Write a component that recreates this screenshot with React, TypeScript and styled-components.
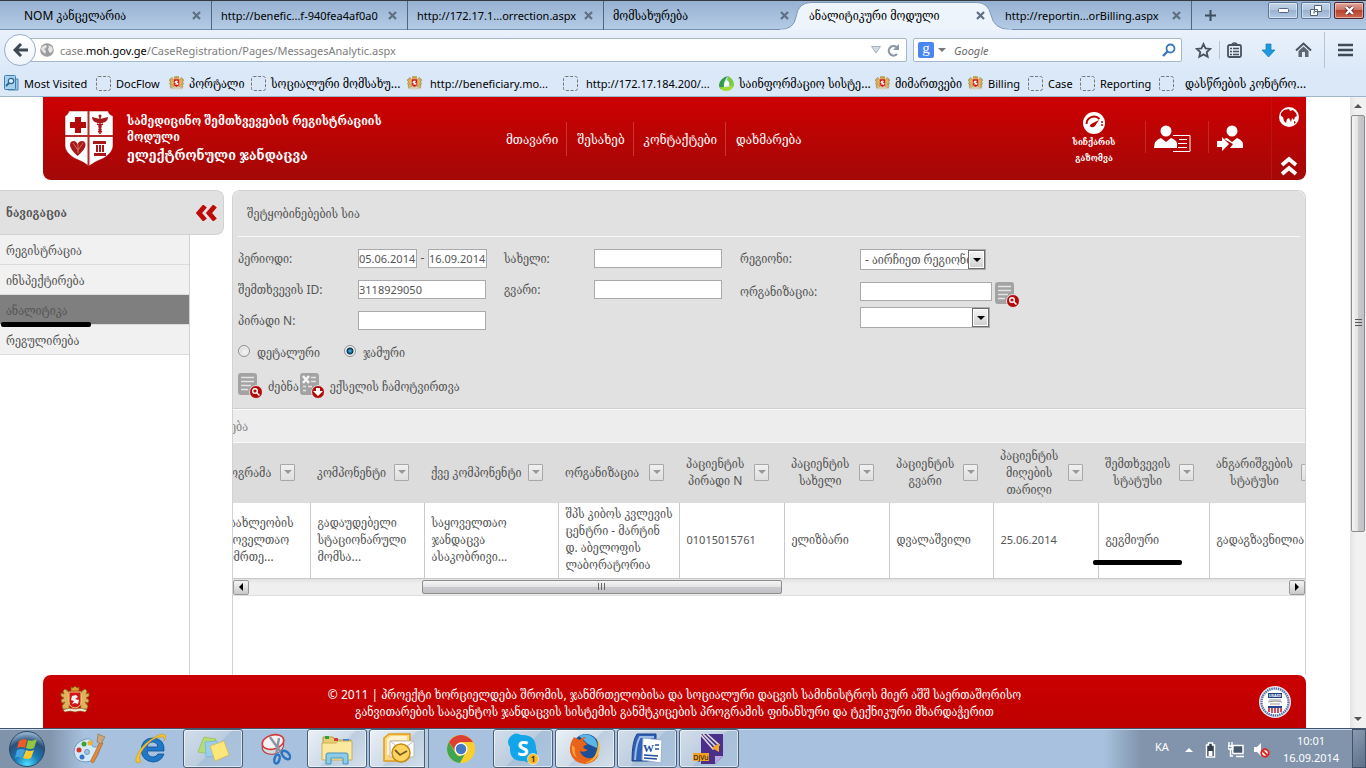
import React, { useLayoutEffect, useRef } from 'react';
import styled, { createGlobalStyle, css } from 'styled-components';

const uiFont = '"Noto Sans", "DejaVu Serif Condensed", sans-serif';

const GlobalStyle = createGlobalStyle`
  *, *::before, *::after { box-sizing: border-box; }
  body { margin: 0; background: #fff; color: #555; font-family: ${uiFont}; font-size: 12px; }
  button, input, select { font: inherit; color: inherit; margin: 0; }
  button { border: 0; padding: 0; background: none; cursor: pointer; }
  a { color: inherit; text-decoration: none; }
  svg { display: block; flex: none; }
  ul { margin: 0; padding: 0; list-style: none; }
  h1, h2, h3, p { margin: 0; font-size: inherit; font-weight: normal; }
`;

const Desktop = styled.div`
  display: flex;
  flex-direction: column;
  min-height: 100vh;
  overflow: hidden;
`;

/* ---------- browser tabs ---------- */
const TabStrip = styled.div`
  display: flex;
  height: 30px;
  color: #000;
  border-top: 1px solid #35383d;
  background: linear-gradient(#96b1d1, #b5cce6);
  box-shadow: inset 0 -1px #7590b0;
`;

const Tab = styled.div<{ $active?: boolean; $edge?: boolean }>`
  position: relative;
  display: flex;
  align-items: center;
  width: 196px;
  flex: 0 1 auto;
  padding: 0 6px 0 9px;
  border-right: 1px solid ${p => (p.$edge ? 'transparent' : '#4f6580')};
  white-space: nowrap;
  &:first-child { width: 212px; padding-left: 24px; }
`;

const TabShape = styled.svg`
  position: absolute;
  left: -20px;
  top: 0;
`;

const TabLabel = styled.span<{ $latin?: boolean }>`
  position: relative;
  flex: 1;
  overflow: hidden;
  font-size: ${p => (p.$latin ? 11 : 12)}px;
`;

const TabClose = styled.button`
  position: relative;
  display: flex;
  padding: 4px;
`;

const NewTab = styled.button`
  padding: 0 13px;
`;

const WindowButtons = styled.div`
  display: flex;
  gap: 3px;
  margin-left: auto;
  padding: 1px 2px 0 0;
`;

const WindowButton = styled.button<{ $danger?: boolean }>`
  display: flex;
  align-items: center;
  justify-content: center;
  width: 30px;
  height: 17px;
  border: 1px solid ${p => (p.$danger ? '#4d2433' : '#5f7796')};
  border-radius: 2px;
  box-shadow: inset 0 0 0 1px rgba(255, 255, 255, 0.45);
  background: ${p =>
    p.$danger
      ? 'linear-gradient(#e0a79b, #cd7566 45%, #b8412f 50%, #cd6a50)'
      : 'linear-gradient(#c3d4e8, #b0c5de 45%, #98b2d0 50%, #b4cae3)'};
`;

/* ---------- browser navigation ---------- */
const Toolbar = styled.div`
  display: flex;
  align-items: center;
  height: 40px;
  padding: 0 12px 0 4px;
  background: linear-gradient(#e9f1fb, #dce9f8);
`;

const BackButton = styled.button`
  position: relative;
  z-index: 1;
  display: flex;
  align-items: center;
  justify-content: center;
  width: 32px;
  height: 32px;
  margin-right: -8px;
  border: 1px solid #98aec8;
  border-radius: 50%;
  background: linear-gradient(#fdfeff, #eef4fb);
`;

const AddressBar = styled.div`
  display: flex;
  align-items: center;
  gap: 6px;
  flex: 1;
  height: 24px;
  padding: 0 6px 0 11px;
  border: 1px solid #a3b7ce;
  border-radius: 2px;
  background: #fff;
`;

const AddressText = styled.div`
  flex: 1;
  font-size: 11px;
  color: #7d7d7d;
  b { font-weight: normal; color: #000; }
`;

const SearchBar = styled.div`
  display: flex;
  align-items: center;
  gap: 4px;
  width: 269px;
  height: 24px;
  margin: 0 13px 0 6px;
  padding: 0 5px 0 4px;
  border: 1px solid #a3b7ce;
  border-radius: 2px;
  background: #fff;
`;

const GoogleBadge = styled.span`
  width: 16px;
  height: 16px;
  border-radius: 2px;
  background: #4a86f0;
  color: #fff;
  font: 15px/12px "Liberation Serif", serif;
  text-align: center;
`;

const SearchInput = styled.input`
  flex: 1;
  min-width: 0;
  padding: 0 0 0 4px;
  border: 0;
  outline: 0;
  background: none;
  font-size: 11px;
  &::placeholder { color: #6b6b6b; font-style: italic; opacity: 1; }
`;

const ToolIcons = styled.div`
  display: flex;
  align-items: center;
  gap: 18px;
  height: 100%;
`;

const ToolGroup = styled.div`
  display: flex;
  align-items: center;
  gap: 7px;
`;

const ToolDivider = styled.i<{ $tall?: boolean }>`
  width: 1px;
  height: ${p => (p.$tall ? 36 : 18)}px;
  margin: ${p => (p.$tall ? '0 -6px' : 0)};
  background: #b5c4d6;
`;

const Bookmarks = styled.nav`
  display: flex;
  align-items: center;
  height: 27px;
  padding-left: 4px;
  border-bottom: 1px solid #9db4cd;
  background: #dae8f8;
  color: #000;
`;

const Bookmark = styled.a<{ $width: number; $gap?: number; $latin?: boolean }>`
  display: flex;
  align-items: center;
  flex: none;
  gap: ${p => p.$gap ?? 5}px;
  width: ${p => p.$width}px;
  font-size: ${p => (p.$latin ? 11 : 12)}px;
  white-space: nowrap;
`;

/* ---------- viewport ---------- */
const Viewport = styled.div`
  display: flex;
  flex: 1;
  background: #fff;
`;

const Page = styled.div`
  display: flex;
  flex-direction: column;
  flex: 1;
  min-width: 0;
`;

const SiteHeader = styled.header`
  display: flex;
  height: 83px;
  margin: 0 44px 0 43px;
  border-radius: 0 0 8px 8px;
  background: linear-gradient(#cd0000, #a40808);
  color: #fff;
`;

const Brand = styled.div`
  display: flex;
  gap: 12px;
  width: 453px;
  padding: 13px 0 0 21px;
`;

const BrandName = styled.div`
  width: 290px;
  padding-top: 3px;
  h1, h2 { font-weight: bold; }
  h2 { font-size: 12px; line-height: 16px; }
  h1 { font-size: 14px; line-height: 20px; }
`;

const MainNav = styled.nav`
  display: flex;
  align-items: center;
  height: 34px;
  margin-top: 25px;
  font-size: 13px;
  a { padding: 0 8px 0 10px; line-height: 34px; border-right: 1px solid #c93434; white-space: nowrap; }
  a:last-child { border-right: 0; }
`;

const HeaderTools = styled.div`
  display: flex;
  margin-left: auto;
`;

const ToolCell = styled.a`
  display: flex;
  align-items: flex-end;
  width: 63px;
  height: 32px;
  margin-top: 24px;
  padding-left: 8px;
  border-left: 1px solid #c22a2a;
`;

const SpeedTest = styled.a`
  display: flex;
  flex-direction: column;
  align-items: center;
  width: 102px;
  padding-top: 15px;
  font-size: 9px;
  line-height: 16px;
  font-weight: bold;
  text-align: center;
`;

const CornerTools = styled.div`
  display: flex;
  flex-direction: column;
  align-items: center;
  justify-content: space-between;
  width: 35px;
  padding: 10px 0 4px;
  border-left: 1px solid #b81616;
`;

const Columns = styled.div`
  display: flex;
  flex: 1;
  gap: 8px;
  margin: 10px 44px 0 0;
`;

const Sidebar = styled.aside`
  position: relative;
  display: flex;
  flex-direction: column;
  width: 224px;
  flex: none;
`;

const SidebarHead = styled.div`
  display: flex;
  align-items: center;
  justify-content: space-between;
  height: 45px;
  padding: 0 6px;
  border: 1px solid #d2d2d2;
  border-left: 0;
  border-radius: 0 8px 8px 0;
  background: #e1e1e1;
  h2 { font-weight: bold; }
`;

const SidebarList = styled.ul`
  flex: 1;
  width: 190px;
  border-right: 1px solid #d2d2d2;
`;

const SidebarItem = styled.li<{ $active?: boolean }>`
  height: 30px;
  padding-left: 6px;
  line-height: 31px;
  border-bottom: 1px solid #dcdcdc;
  background: ${p => (p.$active ? '#7f7f7f' : '#f1f1f1')};
`;

const markStyle = css`
  position: absolute;
  height: 5px;
  border-radius: 2px;
  background: #000;
`;

const SidebarMark = styled.i`
  ${markStyle}
  left: 1px;
  top: 132px;
  width: 90px;
`;

const CellMark = styled.i`
  ${markStyle}
  left: -6px;
  bottom: 13px;
  width: 89px;
`;

const Panel = styled.main`
  display: flex;
  flex-direction: column;
  flex: 1;
  min-width: 0;
  border: 1px solid #d2d2d2;
  border-width: 1px 1px 0;
  border-radius: 8px 8px 0 0;
`;

const FilterBox = styled.form`
  height: 218px;
  padding: 0 5px;
  border-bottom: 1px solid #d0d0d0;
  border-radius: 8px 8px 0 0;
  background: #e1e1e1;
`;

const PanelTitle = styled.h2`
  padding-left: 9px;
  line-height: 45px;
  border-bottom: 1px solid #f8f8f8;
`;

const Fields = styled.div`
  display: flex;
  margin-top: 12px;
`;

const FieldColumn = styled.div<{ $width?: number }>`
  display: flex;
  flex-direction: column;
  gap: 12px;
  width: ${p => (p.$width ? p.$width + 'px' : 'auto')};
`;

const Field = styled.div<{ $label: number }>`
  display: flex;
  > label, > span:first-child { width: ${p => p.$label}px; flex: none; line-height: 19px; }
`;

const boxStyle = css`
  height: 19px;
  padding: 0;
  border: 1px solid #a9a9ae;
  border-radius: 0;
  outline: 0;
  background: #fff;
  font-size: 11px;
`;

const TextBox = styled.input<{ $width: number }>`
  ${boxStyle}
  width: ${p => p.$width}px;
`;

const PeriodDash = styled.span`
  width: 11px;
  text-align: center;
`;

const SelectWrap = styled.div<{ $width: number }>`
  position: relative;
  width: ${p => p.$width}px;
  select {
    ${boxStyle}
    appearance: none;
    display: block;
    width: 100%;
    height: 21px;
    padding: 0 17px 0 4px;
    font-size: 12px;
    text-overflow: clip;
  }
`;

const SelectArrow = styled.span`
  position: absolute;
  top: 1px;
  right: 1px;
  display: flex;
  align-items: center;
  justify-content: center;
  width: 17px;
  height: 19px;
  border: 1px solid #6c6c6c;
  background: linear-gradient(#f6f6f6, #cfcfcf);
  box-shadow: inset 0 0 0 1px #fff;
  pointer-events: none;
`;

const OrgRow = styled(Field)`
  height: 19px;
  margin-bottom: -6px;
  button { margin-left: 3px; }
`;

const Radios = styled.div`
  display: flex;
  gap: 24px;
  margin-top: 13px;
  line-height: 20px;
  label { display: flex; gap: 7px; }
`;

const Radio = styled.input`
  appearance: none;
  width: 12px;
  height: 12px;
  margin: 2px 0 0;
  border: 1px solid #8e8f8f;
  border-radius: 50%;
  background: radial-gradient(circle at 60% 60%, #f5f5f5, #c9cdd1);
  box-shadow: inset 0 0 0 1px #f4f4f4;
  &:checked { background: radial-gradient(circle, #5bc4f0 0, #14648c 2px, #0b2c45 3px, #e8ecef 4px); }
`;

const Actions = styled.div`
  display: flex;
  gap: 1px;
  margin-top: 10px;
  button { display: flex; align-items: center; gap: 6px; white-space: nowrap; }
`;

const GridScroller = styled.div`
  overflow: hidden;
`;

const GridContent = styled.div`
  width: 1124px;
`;

const GroupBar = styled.div`
  height: 34px;
  padding-left: 17px;
  line-height: 34px;
  border: 1px solid #fafafa;
  border-width: 1px 0;
  background: #ededed;
  color: #858585;
`;

const Grid = styled.table`
  width: 100%;
  table-layout: fixed;
  border-collapse: collapse;
  line-height: 17px;
  th { height: 60px; padding: 0 6px 2px 7px; background: #dcdcdc; font-weight: normal; }
  td {
    position: relative;
    height: 75px;
    padding: 0 0 2px 7px;
    border-right: 1px solid #c9c9c9;
    border-bottom: 1px solid #c9c9c9;
    white-space: pre;
  }
`;

const Column = styled.col<{ $width: number }>`
  width: ${p => p.$width}px;
`;

const HeadCell = styled.div`
  display: flex;
  align-items: center;
  justify-content: space-between;
  padding-right: 9px;
  white-space: pre;
  text-align: center;
`;

const FilterButton = styled.button`
  display: flex;
  align-items: center;
  justify-content: center;
  flex: none;
  width: 15px;
  height: 17px;
  border: 1px solid #a8a8a8;
  border-radius: 1px;
  background: linear-gradient(#f0f0f0, #dfdfdf);
`;

const Numeric = styled.span`
  font-size: 11px;
`;

const HScroll = styled.div`
  display: flex;
  height: 17px;
  padding: 1px 0;
  background: linear-gradient(#e2e2e2, #efefef 5px);
  border-bottom: 1px solid #dedede;
`;

const HThumb = styled.div`
  display: flex;
  align-items: center;
  justify-content: center;
  flex: 359;
  border: 1px solid #8c8c8c;
  border-radius: 2px;
  background: linear-gradient(#f5f5f5, #e3e3e5 48%, #cacace 52%, #c1c1c6);
`;

const Space = styled.div<{ $grow: number }>`
  flex: ${p => p.$grow};
`;

const ScrollButton = styled.button`
  display: flex;
  align-items: center;
  justify-content: center;
  width: 16px;
  height: 15px;
  border: 1px solid #999;
  border-radius: 2px;
  background: linear-gradient(#f5f5f5, #c9c9cd);
`;

const VScroll = styled.div`
  display: flex;
  flex-direction: column;
  width: 16px;
  flex: none;
  background: linear-gradient(90deg, #e4e4e4, #f1f1f1 6px);
`;

const VEnd = styled.button`
  display: flex;
  align-items: center;
  justify-content: center;
  height: 18px;
`;

const VThumb = styled.div`
  display: flex;
  align-items: center;
  justify-content: center;
  flex: 417;
  margin: 0 1px;
  border: 1px solid #8c8c8c;
  border-radius: 2px;
  background: linear-gradient(90deg, #f5f5f5, #e3e3e5 48%, #cacace 52%, #c1c1c6);
`;

const Footer = styled.footer`
  display: flex;
  align-items: flex-start;
  justify-content: space-between;
  height: 53px;
  margin: 0 44px 0 43px;
  padding: 11px 15px 0 17px;
  border-radius: 8px 8px 0 0;
  background: linear-gradient(#cb0000, #be0000);
  color: #fff;
  text-align: center;
  line-height: 17px;
`;

/* ---------- taskbar ---------- */
const Taskbar = styled.div`
  display: flex;
  height: 40px;
  border-top: 1px solid #3f556e;
  box-shadow: inset 0 1px #c9d9ea;
  background: linear-gradient(90deg, #7f93ab 0, #8195ad 50px, #a7c1de 84px, #a7c1de calc(100% - 262px), #8194ab calc(100% - 225px), #8194ab);
`;

const StartButton = styled.button`
  width: 59px;
  padding-left: 8px;
`;

const TaskList = styled.div`
  display: flex;
  gap: 2px;
  flex: 1;
`;

const TaskButton = styled.button<{ $open?: boolean; $lit?: boolean }>`
  position: relative;
  display: flex;
  align-items: center;
  justify-content: center;
  width: 60px;
  border-radius: 3px;
  ${p =>
    p.$open &&
    css`
      border: 1px solid #4b5f77;
      box-shadow: inset 0 0 0 1px rgba(255, 255, 255, 0.55);
      background: ${p.$lit ? 'linear-gradient(135deg, #eaf0f6, #cfdbe8 50%, #bccddf 52%, #d5e0eb)' : 'linear-gradient(135deg, #d3deea, #bccddf 50%, #a9c0d9 52%, #adc4de)'};
    `}
`;

const StackEdge = styled.i`
  position: absolute;
  top: -1px;
  right: -1px;
  bottom: -1px;
  width: 5px;
  border-left: 1px solid #4b5f77;
  background: #b9cbdf;
  border-right: 1px solid #5b6f87;
`;

const Tray = styled.div`
  display: flex;
  align-items: center;
  color: #fff;
`;

const TrayLang = styled.span`
  width: 30px;
  padding-bottom: 5px;
  font-size: 11px;
`;

const TrayIcons = styled.div`
  display: flex;
  align-items: center;
  gap: 8px;
  padding-top: 2px;
`;

const Clock = styled.div`
  width: 82px;
  text-align: center;
  font-size: 11px;
  line-height: 17px;
`;

const ShowDesktop = styled.button`
  align-self: stretch;
  width: 14px;
  border: 1px solid #40536a;
  background: linear-gradient(135deg, #8a9bb0, #5d7088);
`;

/* ---------- drawings ---------- */
const CloseGlyph = () => (
  <svg width="9" height="9" viewBox="0 0 9 9"><path d="M1 1l7 7M8 1l-7 7" stroke="#5f7085" strokeWidth="2.2" /></svg>
);

const Dashed = () => (
  <svg width="15" height="15" viewBox="0 0 15 15"><rect x=".5" y=".5" width="14" height="14" rx="2" fill="none" stroke="#777" strokeDasharray="3 1.6" /></svg>
);

const Crest = ({ size = 15 }: { size?: number }) => (
  <svg width={size} height={size * 0.9} viewBox="0 0 30 27">
    <path d="M11 5V1l2 1 2-2 2 2 2-1v4z" fill="#d9a22a" stroke="#8a5a10" strokeWidth=".8" />
    <path d="M10 10L8 5 5 3 3 5l1 3-3-1v3l3 2-3 2 1 3 3-1-3 4 1 3h6z" fill="#dcb45a" stroke="#8d6a25" strokeWidth=".9" />
    <path d="M20 10l2-5 3-2 2 2-1 3 3-1v3l-3 2 3 2-1 3-3-1 3 4-1 3h-6z" fill="#dcb45a" stroke="#8d6a25" strokeWidth=".9" />
    <path d="M3 24q6-3 12-1 6-2 12 1l-2 2q-5-2-10 0-5-2-10 0z" fill="#f3ead2" stroke="#8d6a25" strokeWidth=".6" />
    <path d="M9 6h12v10q0 5-6 6-6-1-6-6z" fill="#d3151c" stroke="#f2d17a" />
    <path d="M12 18l2-3-3-1 1-4 4-1 2 2-3 2 4 1-1 4-3-1z" fill="#f4f4f4" />
  </svg>
);

const MostVisited = () => (
  <svg width="15" height="16" viewBox="0 0 15 16">
    <path d="M10 4h4v11H4" fill="#9cc6e4" stroke="#4d8ab8" />
    <rect x=".5" y=".5" width="11" height="14" rx="1" fill="#a9d0ec" stroke="#3f7eae" />
    <circle cx="7" cy="6" r="2.7" fill="#d9edfa" stroke="#2f648f" strokeWidth="1.2" />
    <path d="M5 8l-3 3" stroke="#2f648f" strokeWidth="1.8" />
  </svg>
);

const GreenDrop = () => (
  <svg width="15" height="15" viewBox="0 0 15 15">
    <path d="M9 0Q1 2 0 9q0 4 4 5L5 10Q4 6 9 0z" fill="#2f9e44" />
    <path d="M9 0q6 3 6 9 0 2-2 3l-3-3q1-3-2-5z" fill="#7ac943" />
    <path d="M1 11q7 1 13-2 0 6-7 6-5 0-6-4z" fill="#a4d935" />
    <path d="M8 5q3 2 2 4-3 1-5 1 0-3 3-5z" fill="#fff" />
  </svg>
);

const Globe = () => (
  <svg width="14" height="14" viewBox="0 0 14 14">
    <circle cx="7" cy="7" r="6.8" fill="#9c9c9c" />
    <path d="M2 4l3-2 2 1-1 2-2 1 2 2-1 3-2-2-2-3zM8 2l4 2 1 3-2 3-2-1-1-3 1-2z" fill="#e6e6e6" />
  </svg>
);

const Shield = () => (
  <svg width="51" height="57" viewBox="0 0 51 57">
    <path d="M5 1h39q1 4 5 5v30q0 6-9 12-8 3-15 8-7-5-15-8-9-6-9-12V6q3-1 4-5z" fill="#fff" stroke="#8f0505" strokeOpacity=".5" />
    <path d="M24.500 1v55M1 26h48" stroke="#b32b2b" strokeWidth="2" />
    <path d="M11 7h6v5h5v6h-5v5h-6v-5H6v-6h5z" fill="#b20b0b" />
    <path d="M28 7l8 2 8-2q0 5-6 6h-4q-6-1-6-6z" fill="#a81818" />
    <path d="M36 6v18M33 14q6 2 3 4t2 4M39 14q-6 2-3 4t-2 4" stroke="#a81818" strokeWidth="1.500" fill="none" />
    <circle cx="36" cy="6" r="1.500" fill="#a81818" />
    <path d="M13.500 46Q6 39 6 35q0-4 4-4 2 0 3.500 3 1.500-3 4-3 4 0 4 4t-8 11z" fill="#a81818" />
    <path d="M9 33l5 7 5-7M14 34v9" stroke="#d98" strokeWidth=".7" fill="none" />
    <path d="M29 31h13v3H29zM30 43h12v3H30zM32 35h2v7h-2zM35 35h2v7h-2zM38 35h2v7h-2z" fill="#a81818" />
  </svg>
);

const Gauge = () => (
  <svg width="22" height="22" viewBox="0 0 22 22">
    <circle cx="11" cy="11" r="11" fill="#fff" />
    <path d="M3.500 12a7.500 7.500 0 0 1 13-5" fill="none" stroke="#bd0202" strokeWidth="2" />
    <path d="M18 10h2M18 13h2" stroke="#bd0202" strokeWidth="1.500" />
    <path d="M16 8l-4 6q-2 2-4 1t0-3z" fill="#bd0202" />
  </svg>
);

const UserForm = () => (
  <svg width="37" height="28" viewBox="0 0 37 28">
    <circle cx="12" cy="6" r="5.500" fill="#fff" />
    <path d="M0 23q0-8 7-10l5 4 5-4q5 2 6 5v5z" fill="#fff" />
    <path d="M19 10.500h17v16H19" fill="none" stroke="#fff" />
    <path d="M25 14.500h8M24 18.500h9M24 22.500h9" stroke="#fff" />
  </svg>
);

const UserLogin = () => (
  <svg width="27" height="28" viewBox="0 0 27 28">
    <circle cx="15" cy="6" r="5.500" fill="#fff" />
    <path d="M7 14l3-1 5 4 5-4q7 2 6 10H13l3-4z" fill="#fff" />
    <path d="M0 16h5v-4l7 7-7 7v-4H0z" fill="#fff" />
  </svg>
);

const WorldBadge = () => (
  <svg width="20" height="20" viewBox="0 0 20 20">
    <circle cx="10" cy="10" r="10" fill="#fff" />
    <path d="M2 6l3-3 5-1 1 2 3-1 3 3 1 3-2 1-1 3-2-2-1 4-2-4-2 1-1 4-2-2-1-4-2-1zM15 14l2 1-2 2z" fill="#c00404" />
  </svg>
);

const ChevronsUp = () => (
  <svg width="18" height="20" viewBox="0 0 18 20">
    <path d="M2 9l7-6 7 6M2 18l7-6 7 6" fill="none" stroke="#fff" strokeWidth="3.800" />
  </svg>
);

const ChevronsLeft = () => (
  <svg width="21" height="16" viewBox="0 0 21 16">
    <path d="M9 1L3 8l6 7M19 1l-6 7 6 7" fill="none" stroke="#bf0a0a" strokeWidth="4.800" />
  </svg>
);

const DocIcon = ({ kind }: { kind: 'find' | 'excel' }) => (
  <svg width="24" height="26" viewBox="0 0 24 26">
    <rect width="19" height="22" rx="3" fill="#a3a3a3" />
    {kind === 'find' ? (
      <path d="M3 4.500h13M3 8.500h13M3 12.500h10M3 16.500h7" stroke="#e4e4e4" strokeWidth="1.300" />
    ) : (
      <>
        <path d="M3 3l6 7M9 3l-6 7" stroke="#f4f4f4" strokeWidth="2.600" />
        <path d="M11 4.500h5M11 8.500h5M3 13.500h3M3 17.500h3M8 13.500h4" stroke="#e4e4e4" strokeWidth="1.300" />
      </>
    )}
    <circle cx="18" cy="19" r="6.500" fill="#b20a0a" stroke="#e1e1e1" />
    {kind === 'find' ? (
      <>
        <circle cx="17" cy="18" r="2.300" fill="none" stroke="#fff" strokeWidth="1.400" />
        <path d="M19 20l2.500 2.500" stroke="#fff" strokeWidth="1.500" />
      </>
    ) : (
      <path d="M16 15h4v3h3l-5 5-5-5h3z" fill="#fff" />
    )}
  </svg>
);

const Triangle = ({ d, fill = '#000' }: { d: 'up' | 'down' | 'left' | 'right'; fill?: string }) => {
  const shapes = { up: 'M0 6l4-4 4 4z', down: 'M0 2l4 4 4-4z', left: 'M6 0L2 4l4 4z', right: 'M2 0l4 4-4 4z' };
  return <svg width="8" height="8" viewBox="0 0 8 8"><path d={shapes[d]} fill={fill} /></svg>;
};

const Usaid = () => (
  <svg width="32" height="32" viewBox="0 0 32 32">
    <circle cx="16" cy="16" r="16" fill="#e9edf4" />
    <circle cx="16" cy="16" r="13.500" fill="#fff" stroke="#5873a8" strokeWidth="2.400" strokeDasharray="1.500 .7" />
    <path d="M9 7h14v5H9z" fill="#1d3f83" />
    <text x="16" y="11" fontSize="4" fontWeight="bold" fill="#fff" textAnchor="middle">USAID</text>
    <path d="M10 14h12M9 16q7-2 14 0M11 18h10" stroke="#999" fill="none" />
    <path d="M9 20h14v2H9z" fill="#23468c" />
    <path d="M10 22v4M13 22v5M16 22v5M19 22v5M22 22v4" stroke="#c2283c" strokeWidth="1.600" />
  </svg>
);

const StartOrb = () => (
  <svg width="38" height="38" viewBox="0 0 38 38">
    <defs>
      <radialGradient id="orb" cx=".5" cy=".95" r=".9">
        <stop offset="0" stopColor="#4fe0ff" />
        <stop offset=".4" stopColor="#1878b5" />
        <stop offset=".75" stopColor="#2b4f78" />
        <stop offset="1" stopColor="#8fb0cd" />
      </radialGradient>
    </defs>
    <circle cx="19" cy="19" r="17.500" fill="url(#orb)" stroke="#2b4865" />
    <path d="M11 11q4-3 8-1l-2 8q-4-2-8 0z" fill="#ef5a26" />
    <path d="M20 10q4 2 9-1l-3 9q-4 2-8 0z" fill="#90c73e" />
    <path d="M9 20q4-2 8 0l-3 8q-4-2-7 0z" fill="#3ea4e0" />
    <path d="M18 20q4 2 8 0l-3 8q-4 2-8 0z" fill="#fdc92d" />
  </svg>
);

const PaintIcon = () => (
  <svg width="32" height="32" viewBox="0 0 32 32">
    <path d="M13 6Q1 9 1 19q1 10 12 10 12-1 13-11 0-5-4-4-4 0-3-4 0-5-6-4z" fill="#d5e8f5" stroke="#6f9cc0" />
    <circle cx="14" cy="19" r="2.500" fill="#a7c1de" stroke="#6f9cc0" />
    <circle cx="11" cy="11" r="2.500" fill="#3da03b" /><circle cx="17" cy="10" r="2.500" fill="#f0b429" />
    <circle cx="6" cy="17" r="2.500" fill="#d5302a" /><circle cx="9" cy="24" r="2.500" fill="#3776c6" />
    <path d="M27 9l3 1-9 19q-3 2-3-2z" fill="#e08a3a" stroke="#a65e20" strokeWidth=".6" />
    <path d="M25 1l7 3-4 7-4-2z" fill="#c9a77d" stroke="#8d6b44" strokeWidth=".6" />
  </svg>
);

const IeIcon = () => (
  <svg width="32" height="32" viewBox="0 0 32 32">
    <path d="M29 18H12q1 6 6 6 3 0 5-3h6q-3 8-11 8Q7 28 6 17 7 5 18 5q12 1 11 13zM12 14h11q-1-5-5.500-5T12 14z" fill="#1f78c8" stroke="#0d4f92" strokeWidth=".8" />
    <path d="M6 29Q0 32 1 25 4 15 15 7q11-8 15-5 2 2-1 6 1-5-2-4Q19 3 9 15 2 24 6 29z" fill="#f3c62f" stroke="#c98d12" strokeWidth=".5" />
  </svg>
);

const NotesIcon = () => (
  <svg width="34" height="30" viewBox="0 0 34 30">
    <path d="M8 3l12 2-5 15L2 18z" fill="#b5dd77" stroke="#88b84a" strokeWidth=".6" />
    <path d="M9 8l12-1 2 15-13 1z" fill="#9bcdf3" stroke="#6aa9d8" strokeWidth=".6" />
    <path d="M14 12l14-5 5 14-14 6z" fill="#fbe77c" stroke="#d0b646" strokeWidth=".7" />
  </svg>
);

const SnipIcon = () => (
  <svg width="32" height="32" viewBox="0 0 32 32">
    <ellipse cx="14" cy="13" rx="11" ry="8" transform="rotate(-15 14 13)" fill="#d5d9de" stroke="#b33" />
    <ellipse cx="14" cy="9" rx="11" ry="7" transform="rotate(-15 14 9)" fill="#f3f3f5" stroke="#d23a3a" strokeWidth="1.600" />
    <path d="M11 4l12 17M20 5l-3 17" stroke="#8b95a3" strokeWidth="2.400" />
    <ellipse cx="27" cy="22" rx="3" ry="5" transform="rotate(-45 27 22)" fill="none" stroke="#2c74c0" strokeWidth="2.500" />
    <ellipse cx="18" cy="26" rx="2.500" ry="4.500" transform="rotate(15 18 26)" fill="none" stroke="#2c74c0" strokeWidth="2.500" />
  </svg>
);

const FolderIcon = () => (
  <svg width="34" height="32" viewBox="0 0 34 32">
    <path d="M3 4h10l2 3h16v5H3z" fill="#e9cf74" stroke="#b9984a" />
    <path d="M5 3h4v3H5z" fill="#2fa23e" /><path d="M14 5h4v3h-4z" fill="#cf3d3d" /><path d="M23 6h6v3h-6z" fill="#3b7dcf" />
    <path d="M2 10h14l2-2h14v19H2z" fill="#fbe9a0" stroke="#cdae56" />
    <path d="M6 31V22q0-2 2-2h18q2 0 2 2v9h-5v-6H11v6z" fill="#8ecbe8" stroke="#4596bd" />
  </svg>
);

const OutlookIcon = () => (
  <svg width="32" height="32" viewBox="0 0 32 32">
    <path d="M1 5l5-4h21v23l-5 4H1z" fill="#fbd77a" stroke="#e09b1c" strokeWidth="1.500" />
    <path d="M4 6l4-3h16v4H8v15H4z" fill="#fff4cf" />
    <path d="M7 8h24v16H7z" fill="#fff" stroke="#b9b9b9" /><path d="M7 8l12 9L31 8" fill="none" stroke="#b9b9b9" />
    <circle cx="18" cy="20" r="9" fill="#fcd563" stroke="#c98a12" strokeWidth="1.500" />
    <path d="M12 17l5 5 7-4" fill="none" stroke="#7a5c1b" strokeWidth="1.800" />
  </svg>
);

const ChromeIcon = () => (
  <svg width="30" height="30" viewBox="0 0 30 30">
    <circle cx="15" cy="15" r="14" fill="#f9cf2c" />
    <path d="M2.900 8A14 14 0 0 1 27.100 8H15q-6 1-6 9z" fill="#dd3f32" />
    <path d="M2.900 8a14 14 0 0 0 11 21l6-11-5 4q-4 1-6-4z" fill="#3ea650" />
    <circle cx="15" cy="15" r="6.500" fill="#fff" /><circle cx="15" cy="15" r="5.200" fill="#4378c4" />
  </svg>
);

const SkypeIcon = () => (
  <svg width="32" height="32" viewBox="0 0 32 32">
    <path d="M3 4q5-6 11-2 15-1 15 14 3 6-2 11-5 4-10 1Q2 29 3 14-1 9 3 4z" fill="#12a5e8" />
    <text x="16" y="23" fontSize="21" fontWeight="bold" fontFamily="Open Sans" fill="#fff" textAnchor="middle">S</text>
    <circle cx="26" cy="26" r="5.500" fill="#fcb823" stroke="#fff" strokeWidth=".6" />
    <text x="26" y="29" fontSize="8" fontWeight="bold" fill="#333" textAnchor="middle">1</text>
  </svg>
);

const FirefoxIcon = () => (
  <svg width="32" height="32" viewBox="0 0 32 32">
    <circle cx="17" cy="14" r="13" fill="#1d4f96" /><path d="M10 3q8-4 14 1 5 4 4 11l-9-4z" fill="#59b6e6" />
    <path d="M5 4q-5 7-4 15 3 11 15 12 11-1 14-10-5 5-12 4-6-2-7-7 4 2 8-1-3 0-5-3 1-2 4-2-1-3-4-4 1-2 3-4-4 0-6 3-3-1-6-3z" fill="#e8641b" />
    <path d="M28 5q5 9 1 17-5 8-13 8 9-3 11-10 3-7 1-15z" fill="#f8b62b" />
    <path d="M3 12q-1 9 5 13-3-5-2-10z" fill="#f8a03a" />
  </svg>
);

const WordIcon = () => (
  <svg width="32" height="32" viewBox="0 0 32 32">
    <path d="M1 28q0-20 5-27h19v27z" fill="#2f60b5" stroke="#1d4188" /><path d="M4 27Q5 10 9 4h14" fill="none" stroke="#9dbbe8" strokeWidth="2" />
    <path d="M12 5l19 2-1 23-19-3z" fill="#fff" stroke="#9cb1d4" />
    <text x="12" y="19" fontSize="11" fontWeight="bold" fontFamily="Liberation Serif" fill="#234f9f">W</text>
    <path d="M24 12h4M24 16h4M13 22l14 1M13 25l13 1" stroke="#234f9f" strokeWidth="1.500" />
  </svg>
);

const DjvuIcon = () => (
  <svg width="32" height="32" viewBox="0 0 32 32">
    <path d="M8 1h22v22l-8 8H8z" fill="#4c2f8a" /><path d="M22 31v-8h8z" fill="#b9a8df" />
    <path d="M7 1l13 15 6-4L14 1M10 1l13 13" fill="none" stroke="#ddd" strokeWidth="1.600" />
    <path d="M19 15l7-5 0 9z" fill="#f5a623" />
    <path d="M0 20h16v8H0z" fill="#f5a11f" />
    <text x="8" y="27" fontSize="7" fill="#111" textAnchor="middle">DjVu</text>
  </svg>
);

/* ---------- data ---------- */
const tabs = [
  { label: 'NOM კანცელარია' },
  { label: 'http://benefic...f-940fea4af0a0', latin: true },
  { label: 'http://172.17.1...orrection.aspx', latin: true },
  { label: 'მომსახურება', edge: true },
  { label: 'ანალიტიკური მოდული', active: true, edge: true },
  { label: 'http://reportin...orBilling.aspx', latin: true },
];

const bookmarks = [
  { icon: <MostVisited />, label: 'Most Visited', width: 92, latin: true },
  { icon: <Dashed />, label: 'DocFlow', width: 73, latin: true },
  { icon: <Crest />, label: 'პორტალი', width: 82 },
  { icon: <Dashed />, label: 'სოციალური მომსახუ...', width: 156 },
  { icon: <Crest />, label: 'http://beneficiary.mo...', width: 156, gap: 8, latin: true },
  { icon: <Dashed />, label: 'http://172.17.184.200/...', width: 156, gap: 8, latin: true },
  { icon: <GreenDrop />, label: 'საინფორმაციო სისტე...', width: 156 },
  { icon: <Crest />, label: 'მიმართვები', width: 93 },
  { icon: <Crest />, label: 'Billing', width: 60, latin: true },
  { icon: <Dashed />, label: 'Case', width: 52, latin: true },
  { icon: <Dashed />, label: 'Reporting', width: 79, latin: true },
  { icon: <Dashed />, label: 'დასწრების კონტრო...', width: 150, gap: 11 },
];

const columns = [
  { width: 103, head: 'პროგრამა', cell: 'მოსახლეობის\nსაყოველთაო\nჯანმრთე...' },
  { width: 114, head: 'კომპონენტი', cell: 'გადაუდებელი\nსტაციონარული\nმომსა...' },
  { width: 134, head: 'ქვე კომპონენტი', cell: 'საყოველთაო\nჯანდაცვა\nასაკობრივი...' },
  { width: 121, head: 'ორგანიზაცია', cell: 'შპს კიბოს კვლევის\nცენტრი - მარტინ\nდ. აბელოფის\nლაბორატორია' },
  { width: 105, head: 'პაციენტის\nპირადი N', cell: '01015015761', numeric: true },
  { width: 105, head: 'პაციენტის\nსახელი', cell: 'ელიზბარი' },
  { width: 104, head: 'პაციენტის\nგვარი', cell: 'დვალაშვილი' },
  { width: 105, head: 'პაციენტის\nმიღების\nთარიღი', cell: '25.06.2014', numeric: true },
  { width: 111, head: 'შემთხვევის\nსტატუსი', cell: 'გეგმიური', marked: true },
  { width: 122, head: 'ანგარიშგების\nსტატუსი', cell: 'გადაგზავნილია' },
];

const sidebarItems = ['რეგისტრაცია', 'ინსპექტირება', 'ანალიტიკა', 'რეგულირება'];

const tasks = [
  { name: 'Paint', icon: <PaintIcon /> },
  { name: 'Internet Explorer', icon: <IeIcon /> },
  { name: 'Sticky Notes', icon: <NotesIcon />, open: true },
  { name: 'Snipping Tool', icon: <SnipIcon /> },
  { name: 'Explorer', icon: <FolderIcon />, open: true, lit: true },
  { name: 'Outlook', icon: <OutlookIcon />, open: true, lit: true, stacked: true },
  { name: 'Chrome', icon: <ChromeIcon /> },
  { name: 'Skype', icon: <SkypeIcon />, open: true },
  { name: 'Firefox', icon: <FirefoxIcon />, open: true, lit: true },
  { name: 'Word', icon: <WordIcon />, open: true },
  { name: 'DjVu', icon: <DjvuIcon />, open: true },
];

/* ---------- sections ---------- */
const BrowserChrome = () => (
  <>
    <TabStrip>
      {tabs.map(t => (
        <Tab key={t.label} $active={t.active} $edge={t.edge}>
          {t.active && (
            <TabShape width="232" height="29" viewBox="0 0 232 29">
              <path d="M0 28.500Q14 28.500 16 16 18 1.500 31 1.500H197Q208 1.500 211 14 214 28.500 230 28.500V30H0z" fill="#edf4fc" stroke="#7f98b6" />
              <path d="M0 29h232" stroke="#e9f1fb" strokeWidth="1" />
            </TabShape>
          )}
          <TabLabel $latin={t.latin}>{t.label}</TabLabel>
          <TabClose aria-label="Close tab"><CloseGlyph /></TabClose>
        </Tab>
      ))}
      <NewTab aria-label="New tab">
        <svg width="11" height="11" viewBox="0 0 11 11"><path d="M5.500 0v11M0 5.500h11" stroke="#3f4c5b" strokeWidth="2" /></svg>
      </NewTab>
      <WindowButtons>
        <WindowButton aria-label="Minimize">
          <svg width="11" height="5" viewBox="0 0 11 5"><rect x=".5" y=".5" width="10" height="4" rx="1" fill="#fff" stroke="#53647a" /></svg>
        </WindowButton>
        <WindowButton aria-label="Restore">
          <svg width="12" height="11" viewBox="0 0 12 11"><path d="M4.500.5h7v6h-7zM.5 4.500h7v6h-7z" fill="#fff" stroke="#53647a" /><path d="M3 6.500h2v2H3z" fill="#8aa" /></svg>
        </WindowButton>
        <WindowButton $danger aria-label="Close">
          <svg width="11" height="9" viewBox="0 0 11 9"><path d="M2 1l7 7M9 1L2 8" stroke="#5a3038" strokeWidth="4" /><path d="M2 1l7 7M9 1L2 8" stroke="#fff" strokeWidth="2.400" /></svg>
        </WindowButton>
      </WindowButtons>
    </TabStrip>
    <Toolbar>
      <BackButton aria-label="Back">
        <svg width="15" height="14" viewBox="0 0 15 14"><path d="M8 1L2 7l6 6M2.500 7H15" fill="none" stroke="#3d4854" strokeWidth="3" /></svg>
      </BackButton>
      <AddressBar>
        <Globe />
        <AddressText>case.<b>moh.gov.ge</b>/CaseRegistration/Pages/MessagesAnalytic.aspx</AddressText>
        <svg width="10" height="8" viewBox="0 0 10 8"><path d="M.5.5h9L5 7z" fill="#d5dbe2" stroke="#a9b3be" /></svg>
        <svg width="13" height="13" viewBox="0 0 13 13"><path d="M9.500 3.200A4.700 4.700 0 1 0 10 10" fill="none" stroke="#8b98a7" strokeWidth="2.200" /><path d="M12 0v6H6z" fill="#8b98a7" /></svg>
      </AddressBar>
      <SearchBar>
        <GoogleBadge>g</GoogleBadge>
        <Triangle d="down" fill="#777" />
        <SearchInput placeholder="Google" aria-label="Search" />
        <svg width="14" height="14" viewBox="0 0 14 14"><circle cx="8.500" cy="5.500" r="4" fill="none" stroke="#3b78b5" strokeWidth="1.800" /><path d="M5.500 8.500L1 13" stroke="#3b78b5" strokeWidth="2.400" /></svg>
      </SearchBar>
      <ToolIcons>
        <ToolGroup>
          <svg width="17" height="17" viewBox="0 0 17 17"><path d="M8.500 2l2 4.400 4.700.5-3.500 3.200 1 4.700-4.200-2.400-4.200 2.400 1-4.700L1.800 6.900l4.700-.5z" fill="none" stroke="#47525e" strokeWidth="1.800" /></svg>
          <ToolDivider />
          <svg width="15" height="16" viewBox="0 0 15 16"><rect x="1" y="3" width="13" height="12" rx="1.500" fill="none" stroke="#47525e" strokeWidth="1.800" /><path d="M5 3q0-2 2.500-2T10 3M3 6.500h2M6 6.500h6M3 9.500h2M6 9.500h6M3 12.500h2M6 12.500h6" fill="none" stroke="#47525e" strokeWidth="1.400" /></svg>
        </ToolGroup>
        <svg width="17" height="15" viewBox="0 0 15 15"><path d="M5 1h5v6h4l-6.500 7L1 7h4z" fill="#1a9be0" stroke="#1675ab" strokeWidth=".7" /></svg>
        <svg width="17" height="16" viewBox="0 0 17 16"><path d="M1 8.500L8.500 1.500 16 8.500" fill="none" stroke="#47525e" strokeWidth="2" /><path d="M3.500 9l5-4.500L13.500 9v6h-3.500v-5h-3v5H3.500z" fill="#5d6772" /></svg>
        <ToolDivider $tall />
        <svg width="17" height="14" viewBox="0 0 17 14"><path d="M1 2h15M1 7h15M1 12h15" stroke="#3f4b57" strokeWidth="2.600" /></svg>
      </ToolIcons>
    </Toolbar>
    <Bookmarks>
      {bookmarks.map(b => (
        <Bookmark key={b.label} href="#" $width={b.width} $gap={b.gap} $latin={b.latin}>{b.icon}{b.label}</Bookmark>
      ))}
    </Bookmarks>
  </>
);

const FilterForm = () => (
  <FilterBox>
    <PanelTitle>შეტყობინებების სია</PanelTitle>
    <Fields>
      <FieldColumn $width={266}>
        <Field $label={120}>
          <label htmlFor="from">პერიოდი:</label>
          <TextBox id="from" $width={59} defaultValue="05.06.2014" />
          <PeriodDash>-</PeriodDash>
          <TextBox $width={59} defaultValue="16.09.2014" aria-label="პერიოდი" />
        </Field>
        <Field $label={120}>
          <label htmlFor="case">შემთხვევის ID:</label>
          <TextBox id="case" $width={128} defaultValue="3118929050" />
        </Field>
        <Field $label={120}>
          <label htmlFor="pid">პირადი N:</label>
          <TextBox id="pid" $width={128} />
        </Field>
      </FieldColumn>
      <FieldColumn $width={236}>
        <Field $label={90}>
          <label htmlFor="name">სახელი:</label>
          <TextBox id="name" $width={128} />
        </Field>
        <Field $label={90}>
          <label htmlFor="surname">გვარი:</label>
          <TextBox id="surname" $width={128} />
        </Field>
      </FieldColumn>
      <FieldColumn>
        <Field $label={120}>
          <label htmlFor="region">რეგიონი:</label>
          <SelectWrap $width={126}>
            <select id="region"><option>- აირჩიეთ რეგიონი -</option></select>
            <SelectArrow><Triangle d="down" /></SelectArrow>
          </SelectWrap>
        </Field>
        <OrgRow $label={120}>
          <label htmlFor="org">ორგანიზაცია:</label>
          <TextBox id="org" $width={132} />
          <button type="button" aria-label="ძებნა"><DocIcon kind="find" /></button>
        </OrgRow>
        <Field $label={120}>
          <span />
          <SelectWrap $width={130}>
            <select aria-label="ორგანიზაცია"><option /></select>
            <SelectArrow><Triangle d="down" /></SelectArrow>
          </SelectWrap>
        </Field>
      </FieldColumn>
    </Fields>
    <Radios>
      <label><Radio type="radio" name="mode" />დეტალური</label>
      <label><Radio type="radio" name="mode" defaultChecked />ჯამური</label>
    </Radios>
    <Actions>
      <button type="button"><DocIcon kind="find" />ძებნა</button>
      <button type="button"><DocIcon kind="excel" />ექსელის ჩამოტვირთვა</button>
    </Actions>
  </FilterBox>
);

const ResultGrid = () => {
  const scroller = useRef<HTMLDivElement>(null);
  useLayoutEffect(() => {
    if (scroller.current) scroller.current.scrollLeft = 26;
  }, []);
  return (
    <>
      <GridScroller ref={scroller}>
        <GridContent>
          <GroupBar>ვება</GroupBar>
          <Grid>
            <colgroup>{columns.map((c, i) => <Column key={i} $width={c.width} />)}</colgroup>
            <thead>
              <tr>
                {columns.map(c => (
                  <th key={c.head}>
                    <HeadCell>{c.head}<FilterButton aria-label="ფილტრი"><Triangle d="down" fill="#999" /></FilterButton></HeadCell>
                  </th>
                ))}
              </tr>
            </thead>
            <tbody>
              <tr>
                {columns.map(c => (
                  <td key={c.head}>{c.numeric ? <Numeric>{c.cell}</Numeric> : c.cell}{c.marked && <CellMark />}</td>
                ))}
              </tr>
            </tbody>
          </Grid>
        </GridContent>
      </GridScroller>
      <HScroll>
        <ScrollButton aria-label="Scroll left"><Triangle d="left" /></ScrollButton>
        <Space $grow={173} />
        <HThumb><svg width="8" height="7" viewBox="0 0 8 7"><path d="M.5 0v7M3.500 0v7M6.500 0v7" stroke="#666" /></svg></HThumb>
        <Space $grow={508} />
        <ScrollButton aria-label="Scroll right"><Triangle d="right" /></ScrollButton>
      </HScroll>
    </>
  );
};

const WindowsTaskbar = () => (
  <Taskbar>
    <StartButton aria-label="Start"><StartOrb /></StartButton>
    <TaskList>
      {tasks.map(t => (
        <TaskButton key={t.name} aria-label={t.name} $open={t.open} $lit={t.lit}>
          {t.icon}
          {t.stacked && <StackEdge />}
        </TaskButton>
      ))}
    </TaskList>
    <Tray>
      <TrayLang>KA</TrayLang>
      <TrayIcons>
        <Triangle d="up" fill="#fff" />
        <svg width="19" height="16" viewBox="0 0 19 16"><path d="M7.500 3v-2h4v2h2v12h-8V3z" fill="#333e4c" stroke="#fff" strokeWidth="1.500" /><path d="M7.500 9h4v5h-4z" fill="#fff" /></svg>
        <svg width="17" height="16" viewBox="0 0 17 16"><path d="M4 3.500h11v8H5zM8 14.500h8" fill="#46566b" stroke="#fff" strokeWidth="1.500" /><path d="M1 0v4M4 0v4M0 4h5v3H0zM2.500 7v7H5" fill="none" stroke="#fff" strokeWidth="1.400" /></svg>
        <svg width="17" height="16" viewBox="0 0 17 16"><path d="M1 5h3l4-4v13l-4-4H1z" fill="#fff" /><circle cx="12" cy="11" r="3.700" fill="#fff" stroke="#d92b2b" strokeWidth="2" /><path d="M9.500 8.500l5 5" stroke="#d92b2b" strokeWidth="1.800" /></svg>
      </TrayIcons>
      <Clock>10:01<br />16.09.2014</Clock>
      <ShowDesktop aria-label="Show desktop" />
    </Tray>
  </Taskbar>
);

export default function App() {
  return (
    <Desktop>
      <GlobalStyle />
      <BrowserChrome />
      <Viewport>
        <Page>
          <SiteHeader>
            <Brand>
              <Shield />
              <BrandName>
                <h2>სამედიცინო შემთხვევების რეგისტრაციის<br />მოდული</h2>
                <h1>ელექტრონული ჯანდაცვა</h1>
              </BrandName>
            </Brand>
            <MainNav>
              <a href="#">მთავარი</a>
              <a href="#">შესახებ</a>
              <a href="#">კონტაქტები</a>
              <a href="#">დახმარება</a>
            </MainNav>
            <HeaderTools>
              <SpeedTest href="#"><Gauge />სიჩქარის<br />გაზომვა</SpeedTest>
              <ToolCell href="#" aria-label="Profile"><UserForm /></ToolCell>
              <ToolCell href="#" aria-label="Log in"><UserLogin /></ToolCell>
              <CornerTools><WorldBadge /><ChevronsUp /></CornerTools>
            </HeaderTools>
          </SiteHeader>
          <Columns>
            <Sidebar>
              <SidebarHead><h2>ნავიგაცია</h2><ChevronsLeft /></SidebarHead>
              <SidebarList>
                {sidebarItems.map((s, i) => <SidebarItem key={s} $active={i === 2}><a href="#">{s}</a></SidebarItem>)}
              </SidebarList>
              <SidebarMark />
            </Sidebar>
            <Panel>
              <FilterForm />
              <ResultGrid />
            </Panel>
          </Columns>
          <Footer>
            <Crest size={30} />
            <p>
              © 2011 | პროექტი ხორციელდება შრომის, ჯანმრთელობისა და სოციალური დაცვის სამინისტროს მიერ აშშ საერთაშორისო<br />
              განვითარების სააგენტოს ჯანდაცვის სისტემის განმტკიცების პროგრამის ფინანსური და ტექნიკური მხარდაჭერით
            </p>
            <Usaid />
          </Footer>
        </Page>
        <VScroll>
          <VEnd aria-label="Scroll up"><Triangle d="up" fill="#555" /></VEnd>
          <VThumb><svg width="7" height="8" viewBox="0 0 7 8"><path d="M0 .5h7M0 3.500h7M0 6.500h7" stroke="#555" /></svg></VThumb>
          <Space $grow={179} />
          <VEnd aria-label="Scroll down"><Triangle d="down" fill="#555" /></VEnd>
        </VScroll>
      </Viewport>
      <WindowsTaskbar />
    </Desktop>
  );
}
